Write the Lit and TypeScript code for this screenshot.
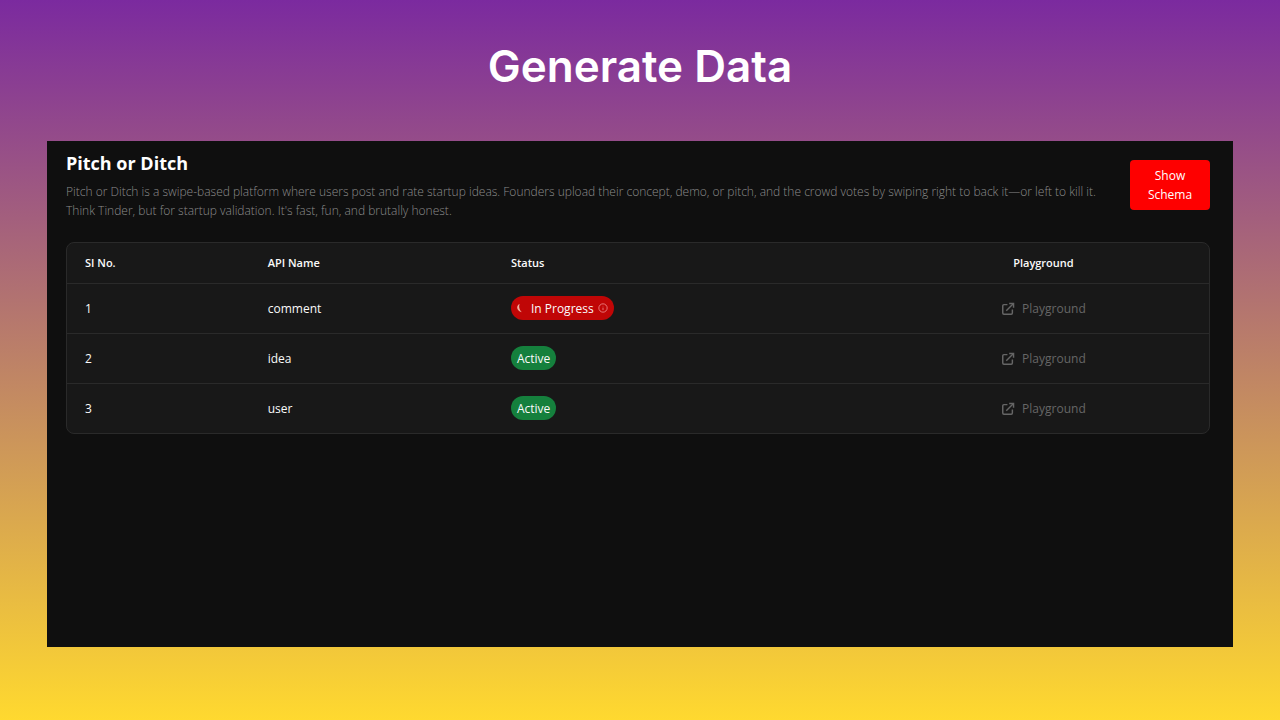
import { LitElement, html, css, svg } from "lit";
import { customElement, state } from "lit/decorators.js";

type Status = "progress" | "active";

interface Api {
  name: string;
  status: Status;
}

const externalLink = html`<svg class="link-icon" viewBox="0 0 24 24" aria-hidden="true">
  ${svg`<path d="M11 4.500H5a2 2 0 0 0-2 2V19a2 2 0 0 0 2 2h12.500a2 2 0 0 0 2-2v-6" /><path d="M14 2.500h7.500V10" /><path d="M9 15 21 3" />`}
</svg>`;

const spinner = html`<svg class="spinner" viewBox="0 0 12 12" aria-hidden="true">
  ${svg`<path d="M3.200 1.200C-1.400 3-.800 9.800 5.800 11C2.800 8.600 1.800 4.200 3.200 1.200Z" />`}
</svg>`;

const info = html`<svg class="info" viewBox="0 0 24 24" aria-hidden="true">
  ${svg`<circle cx="12" cy="12" r="10" /><path d="M12 17v-6M12 7v1" />`}
</svg>`;

@customElement("app-root")
export class AppRoot extends LitElement {
  static styles = css`
    :host {
      display: block;
      font-family: "Open Sans", "Noto Sans", sans-serif;
      font-size: 12px;
      line-height: 19px;
      color: #fafafa;
    }
    * {
      box-sizing: border-box;
    }
    .page {
      display: flex;
      flex-direction: column;
      min-height: 100vh;
      padding: 36px 47px 73px;
      background: linear-gradient(#7b2a9f, #ffd92f);
    }
    .title {
      margin: 0 0 45px;
      font-family: Inter, sans-serif;
      font-size: 44px;
      font-weight: 600;
      line-height: 60px;
      text-align: center;
      color: #fff;
    }
    .panel {
      flex: 1;
      padding: 10px 23px 24px 19px;
      background: #0f0f0f;
    }
    .head {
      display: flex;
      align-items: flex-start;
      justify-content: space-between;
      gap: 16px;
      margin-bottom: 22px;
    }
    .name {
      margin: 0 0 7px;
      font-size: 18px;
      font-weight: 700;
      line-height: 24px;
      color: #fff;
    }
    .about {
      margin: 0;
      font-weight: 300;
      color: #8c8c8c;
    }
    .schema {
      flex: none;
      width: 80px;
      margin-top: 9px;
      padding: 6px 12px;
      border: 0;
      border-radius: 4px;
      background: #fe0000;
      color: #fff;
      font: inherit;
    }
    .frame {
      border: 1px solid #2a2a2a;
      border-radius: 8px;
      overflow: hidden;
      background: #181818;
    }
    .apis {
      width: 100%;
      table-layout: fixed;
      border-collapse: collapse;
    }
    .apis th,
    .apis td {
      padding: 0 18px;
      text-align: left;
    }
    .apis th {
      height: 40px;
      font-size: 11px;
      font-weight: 600;
    }
    .apis td {
      height: 50px;
      border-top: 1px solid #2a2a2a;
    }
    .apis .center {
      text-align: center;
    }
    .col-no {
      width: 16%;
    }
    .col-name {
      width: 21.3%;
    }
    .col-play {
      width: 29%;
    }
    .badge {
      display: inline-flex;
      align-items: center;
      height: 24px;
      padding: 0 6px;
      border-radius: 12px;
      vertical-align: middle;
    }
    .active {
      background: #15803d;
    }
    .progress {
      gap: 4px;
      background: #c00606;
    }
    .play {
      display: inline-flex;
      align-items: center;
      gap: 7px;
      color: #666;
      text-decoration: none;
      vertical-align: middle;
    }
    svg {
      flex: none;
      fill: none;
      stroke: currentColor;
    }
    .link-icon {
      width: 14px;
      height: 14px;
      stroke-width: 2.5;
    }
    .spinner {
      width: 10px;
      height: 10px;
      fill: currentColor;
      stroke: none;
      color: #f0b0a0;
    }
    .info {
      width: 10px;
      height: 10px;
      stroke-width: 2;
      color: #ee8c8c;
    }
  `;

  @state() private apis: Api[] = [
    { name: "comment", status: "progress" },
    { name: "idea", status: "active" },
    { name: "user", status: "active" },
  ];

  private badge(status: Status) {
    return status === "progress"
      ? html`<span class="badge progress">${spinner}<span>In Progress</span>${info}</span>`
      : html`<span class="badge active">Active</span>`;
  }

  render() {
    return html`
      <main class="page">
        <h1 class="title">Generate Data</h1>
        <section class="panel">
          <header class="head">
            <div>
              <h2 class="name">Pitch or Ditch</h2>
              <p class="about">
                Pitch or Ditch is a swipe-based platform where users post and rate startup ideas. Founders upload their
                concept, demo, or pitch, and the crowd votes by swiping right to back it—or left to kill it. Think
                Tinder, but for startup validation. It's fast, fun, and brutally honest.
              </p>
            </div>
            <button class="schema" type="button">Show Schema</button>
          </header>
          <div class="frame">
            <table class="apis">
              <colgroup>
                <col class="col-no" />
                <col class="col-name" />
                <col />
                <col class="col-play" />
              </colgroup>
              <thead>
                <tr>
                  <th scope="col">SI No.</th>
                  <th scope="col">API Name</th>
                  <th scope="col">Status</th>
                  <th scope="col" class="center">Playground</th>
                </tr>
              </thead>
              <tbody>
                ${this.apis.map(
                  (api, i) => html`<tr>
                    <td>${i + 1}</td>
                    <td>${api.name}</td>
                    <td>${this.badge(api.status)}</td>
                    <td class="center"><a class="play" href="#${api.name}">${externalLink}<span>Playground</span></a></td>
                  </tr>`
                )}
              </tbody>
            </table>
          </div>
        </section>
      </main>
    `;
  }
}
